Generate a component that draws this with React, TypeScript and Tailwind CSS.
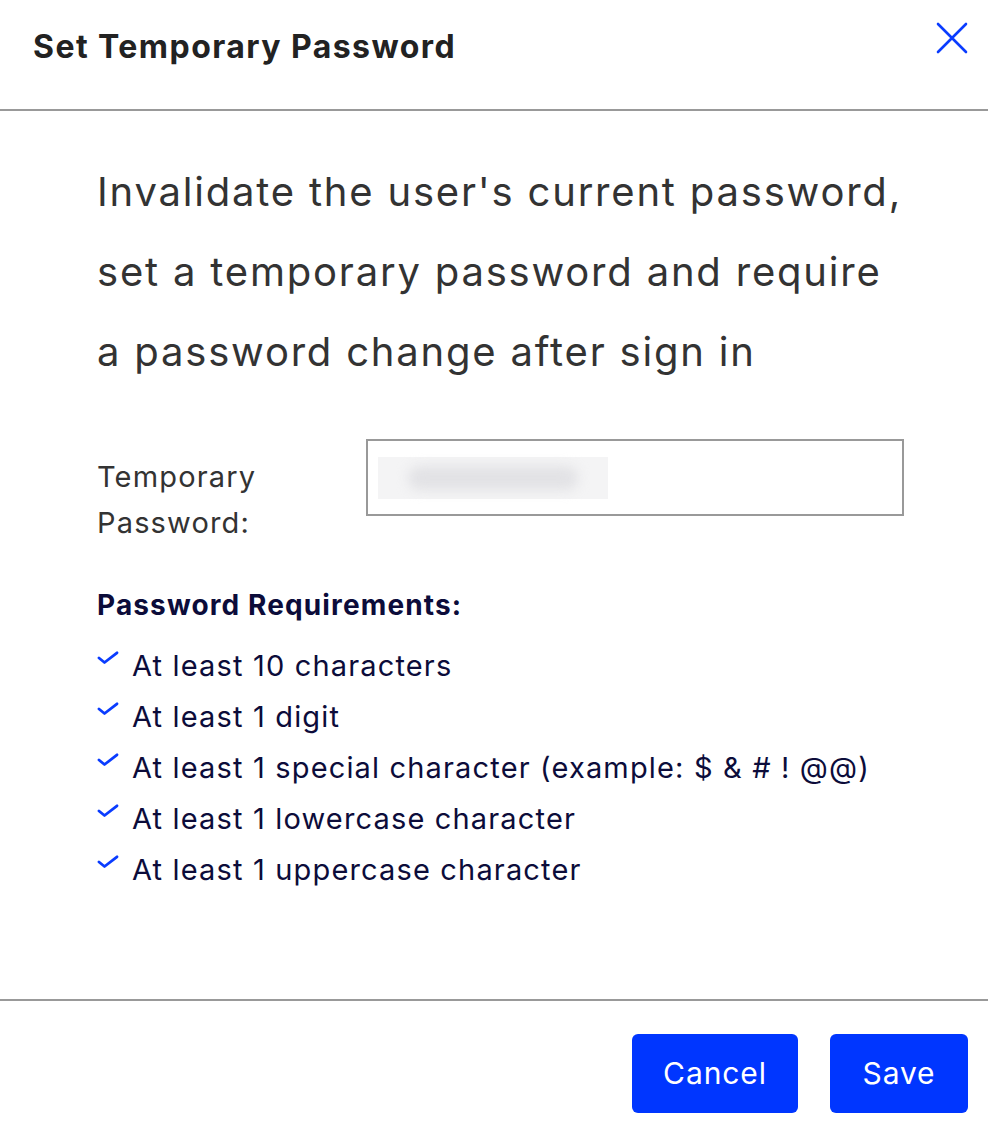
const requirements = [
  'At least 10 characters',
  'At least 1 digit',
  'At least 1 special character (example: $ & # ! @@)',
  'At least 1 lowercase character',
  'At least 1 uppercase character',
]

function Check() {
  return (
    <svg width="22" height="14" viewBox="0 0 22 14" className="shrink-0 mt-[11px]">
      <path d="M2 7 L7.5 11.5 L20 1.8" fill="none" stroke="#0a3cff" strokeWidth="2.8" strokeLinecap="round" strokeLinejoin="round" />
    </svg>
  )
}

function CloseIcon() {
  return (
    <svg width="32" height="32" viewBox="0 0 32 32">
      <path d="M2 2 L30 30 M30 2 L2 30" stroke="#0a3cff" strokeWidth="2.6" strokeLinecap="round" />
    </svg>
  )
}

export default function App() {
  return (
    <div className="w-[988px] h-[1134px] bg-white font-['Inter',sans-serif] flex flex-col">
      {/* header */}
      <div className="h-[111px] flex items-center justify-between pl-[33px] pr-[20px] border-b-2 border-[#999999]">
        <h1 className="text-[32px] tracking-[0.045em] font-bold text-[#222222] -mt-[16px]">Set Temporary Password</h1>
        <button className="-mt-[34px]">
          <CloseIcon />
        </button>
      </div>

      {/* body */}
      <div className="flex-1 pl-[97px] pt-[41px]">
        <p className="w-[815px] text-[40px] tracking-[0.045em] leading-[80px] text-[#333333]">
          Invalidate the user's current password, set a temporary password and require a password change after sign in
        </p>

        <div className="flex mt-[47px]">
          <label className="w-[269px] pt-[15px] text-[29px] tracking-[0.04em] leading-[46px] text-[#333333]">
            Temporary
            <br />
            Password:
          </label>
          <div className="w-[538px] h-[77px] border-2 border-[#999999] flex items-center px-[10px]">
            <div className="w-[230px] h-[42px] bg-[#f4f4f5] flex items-center justify-center">
              <div className="w-[170px] h-[24px] rounded-full bg-[#e2e2e5] blur-[6px]" />
            </div>
          </div>
        </div>

        <h2 className="mt-[39px] text-[28px] tracking-[0.04em] leading-[40px] font-bold text-[#0c0c3a]">Password Requirements:</h2>
        <ul className="mt-[15px]">
          {requirements.map(r => (
            <li key={r} className="flex gap-[13px] text-[29px] tracking-[0.04em] leading-[51px] text-[#0c0c3a]">
              <Check />
              <span>{r}</span>
            </li>
          ))}
        </ul>
      </div>

      {/* footer */}
      <div className="border-t-2 border-[#999999] h-[135px] flex justify-end items-start gap-[32px] pt-[33px] pr-[20px]">
        <button className="w-[166px] h-[79px] rounded-[6px] bg-[#0036ff] text-white text-[30px] tracking-[0.03em]">Cancel</button>
        <button className="w-[138px] h-[79px] rounded-[6px] bg-[#0036ff] text-white text-[30px] tracking-[0.03em]">Save</button>
      </div>
    </div>
  )
}
